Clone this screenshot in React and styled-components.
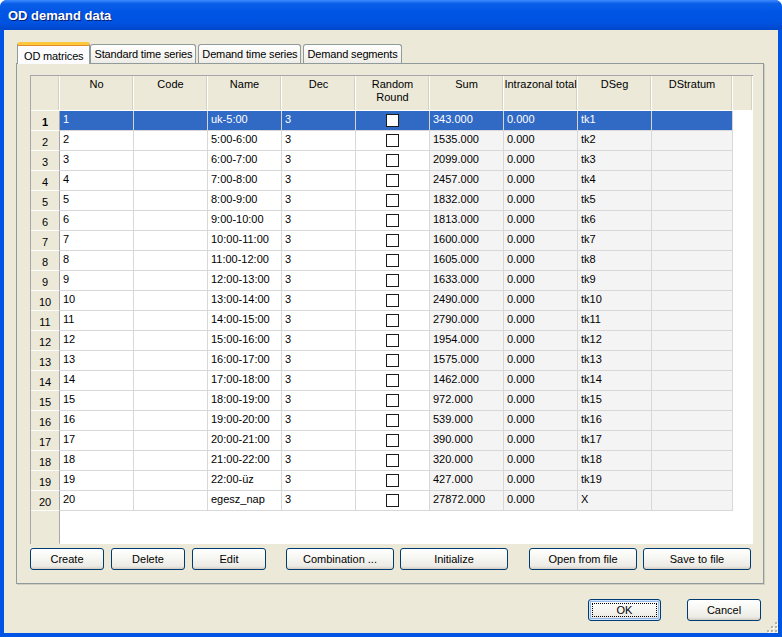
import React from 'react'
import styled, { createGlobalStyle, css } from 'styled-components'

const GlobalStyle = createGlobalStyle`
  *, *::before, *::after {
    box-sizing: border-box;
  }
  html, body {
    margin: 0;
    padding: 0;
    background: #fff;
  }
  body {
    font-family: 'Liberation Sans', Arial, sans-serif;
    font-size: 11px;
    color: #000;
  }
`

// Table content
const names = [
  'uk-5:00', '5:00-6:00', '6:00-7:00', '7:00-8:00', '8:00-9:00', '9:00-10:00',
  '10:00-11:00', '11:00-12:00', '12:00-13:00', '13:00-14:00', '14:00-15:00',
  '15:00-16:00', '16:00-17:00', '17:00-18:00', '18:00-19:00', '19:00-20:00',
  '20:00-21:00', '21:00-22:00', '22:00-üz', 'egesz_nap',
]
const sums = [
  343, 1535, 2099, 2457, 1832, 1813, 1600, 1605, 1633, 2490,
  2790, 1954, 1575, 1462, 972, 539, 390, 320, 427, 27872,
]
const rows = names.map((name, i) => ({
  no: i + 1,
  name,
  sum: `${sums[i]}.000`,
  dseg: i === 19 ? 'X' : `tk${i + 1}`,
}))

const columns = ['No', 'Code', 'Name', 'Dec', 'Random Round', 'Sum', 'Intrazonal total', 'DSeg', 'DStratum', '']
const gridTemplate = '29px repeat(8, 74px) 81px 1fr'

// Window frame
const Window = styled.div`
  width: 782px;
  height: 637px;
  display: flex;
  flex-direction: column;
  background: #0054e3;
  border-radius: 7px 7px 0 0;
  overflow: hidden;
  position: relative;
`

const TitleBar = styled.div`
  height: 30px;
  flex-shrink: 0;
  display: flex;
  align-items: center;
  padding-left: 8px;
  padding-top: 1px;
  background: linear-gradient(
    to bottom,
    #3d8bff 0%,
    #0a5fe8 12%,
    #0055e5 40%,
    #0053e1 75%,
    #0047c9 100%
  );
`

const Title = styled.span`
  font-family: 'Liberation Sans', Arial, sans-serif;
  font-weight: 700;
  font-size: 13px;
  color: #fff;
  text-shadow: 1px 1px 0 #0a1e6e;
`

const Client = styled.div`
  flex: 1;
  margin: 0 4px 4px 4px;
  background: #ece9d8;
  display: flex;
  flex-direction: column;
  padding: 12px 14px 0 12px;
`

// Tabs
const TabStrip = styled.div`
  display: flex;
  align-items: flex-end;
  height: 21px;
  padding-left: 1px;
  position: relative;
  z-index: 1;
`

const Tab = styled.div`
  height: 19px;
  padding: 0 3px;
  display: flex;
  align-items: center;
  border: 1px solid #919b9c;
  border-bottom: none;
  border-radius: 3px 3px 0 0;
  background: linear-gradient(to bottom, #fefefe, #f4f3ee 70%, #ecebe5);
  margin-left: ${(p) => p.$gap || 0}px;
  white-space: nowrap;
  letter-spacing: -0.15px;

  ${(p) =>
    p.$active &&
    css`
      height: 22px;
      padding: 2px 6px 0 6px;
      background: #fcfcfe;
      border-top: 3px solid #ffc83c;
      box-shadow: inset 0 1px 0 #e68b2c;
      margin-bottom: -1px;
    `}
`

const Panel = styled.div`
  height: 521px;
  border: 1px solid #919b9c;
  background: #ece9d8;
  padding: 11px 0 0 13px;
  display: flex;
  flex-direction: column;
  box-shadow: 1px 1px 0 #d0cec2;
`

// Grid
const Grid = styled.div`
  width: 723px;
  height: 469px;
  flex-shrink: 0;
  border-top: 1px solid #a7a6aa;
  border-left: 1px solid #a7a6aa;
  background: #fff;
  display: flex;
  flex-direction: column;
`

const GridRow = styled.div`
  display: grid;
  grid-template-columns: ${gridTemplate};
  height: ${(p) => p.$height}px;
  flex-shrink: 0;
`

const FillRow = styled(GridRow)`
  flex: 1;
`

const HeaderCell = styled.div`
  background: #ece9d8;
  border-right: 1px solid #fff;
  box-shadow: inset -1px 0 0 #d6d2c2;
  border-bottom: 1px solid #fff;
  text-align: center;
  padding-top: 2px;
  line-height: 13px;
  white-space: pre-line;
  overflow: hidden;
`

const RowHeader = styled.div`
  background: #ece9d8;
  border-right: 1px solid #a7a6aa;
  border-bottom: 1px solid ${(p) => (p.$fill ? '#ece9d8' : '#fff')};
  display: flex;
  align-items: center;
  justify-content: center;
  padding-top: 2px;
  font-weight: ${(p) => (p.$current ? 700 : 400)};
`

const Cell = styled.div`
  background: ${(p) => (p.$selected ? '#316ac5' : p.$readonly ? '#f5f4f4' : '#fff')};
  color: ${(p) => (p.$selected ? '#fff' : '#000')};
  border-right: 1px solid ${(p) => (p.$selected ? '#d4d4d4' : '#d8d8d8')};
  border-bottom: 1px solid #d8d8d8;
  padding: 2px 0 0 3px;
  white-space: nowrap;
  overflow: hidden;
  display: flex;
  justify-content: ${(p) => (p.$center ? 'center' : 'flex-start')};
`

const Blank = styled.div`
  background: #fff;
`

const CheckBox = styled.span`
  display: block;
  width: 13px;
  height: 13px;
  border: 1px solid #1a1a1a;
  background: #fff;
  margin-top: 1px;
  margin-left: -3px;
`

// Buttons
const ButtonBar = styled.div`
  display: flex;
  margin-top: 4px;
`

const Button = styled.button`
  font-family: 'Liberation Sans', Arial, sans-serif;
  font-size: 11px;
  color: #000;
  height: 22px;
  width: ${(p) => p.$width || 74}px;
  margin-left: ${(p) => p.$gap || 0}px;
  padding: 0;
  border: 1px solid #003c74;
  border-radius: 3px;
  background: linear-gradient(to bottom, #ffffff 0%, #f7f7f3 40%, #ecebe6 85%, #d6d0c5 100%);
  box-shadow: inset 0 -1px 0 #d6d0c5;
  position: relative;

  ${(p) =>
    p.$default &&
    css`
      box-shadow: inset 0 0 0 1px #cee7ff, inset 0 0 0 2px #98b8ea;
      &::after {
        content: '';
        position: absolute;
        inset: 3px;
        border: 1px dotted #000;
      }
    `}
`

const Footer = styled.div`
  display: flex;
  justify-content: flex-end;
  padding-top: 15px;
  padding-right: 3px;
`

const Grip = styled.svg`
  position: absolute;
  right: 4px;
  bottom: 4px;
`

function ResizeGrip() {
  const dots = [
    [10, 2],
    [6, 6], [10, 6],
    [2, 10], [6, 10], [10, 10],
  ]
  return (
    <Grip width="13" height="13" viewBox="0 0 13 13">
      {dots.map(([x, y]) => (
        <g key={`${x}-${y}`}>
          <rect x={x + 1} y={y + 1} width="2" height="2" fill="#fff" />
          <rect x={x} y={y} width="2" height="2" fill="#b8b4a2" />
        </g>
      ))}
    </Grip>
  )
}

const App = () => {
  return (
    <>
      <GlobalStyle />
      <Window>
        <TitleBar>
          <Title>OD demand data</Title>
        </TitleBar>
        <Client>
          <TabStrip>
            <Tab $active>OD matrices</Tab>
            <Tab>Standard time series</Tab>
            <Tab $gap={2}>Demand time series</Tab>
            <Tab $gap={2}>Demand segments</Tab>
          </TabStrip>
          <Panel>
            <Grid>
              <GridRow $height={35}>
                <HeaderCell />
                {columns.map((c, i) => (
                  <HeaderCell key={i}>{c === 'Random Round' ? 'Random\nRound' : c}</HeaderCell>
                ))}
              </GridRow>
              {rows.map((r, i) => {
                const sel = i === 0
                return (
                  <GridRow key={r.no} $height={20}>
                    <RowHeader $current={sel}>{r.no}</RowHeader>
                    <Cell $selected={sel}>{r.no}</Cell>
                    <Cell $selected={sel} />
                    <Cell $selected={sel}>{r.name}</Cell>
                    <Cell $selected={sel}>3</Cell>
                    <Cell $selected={sel} $center>
                      <CheckBox />
                    </Cell>
                    <Cell $selected={sel} $readonly>{r.sum}</Cell>
                    <Cell $selected={sel} $readonly>0.000</Cell>
                    <Cell $selected={sel} $readonly>{r.dseg}</Cell>
                    <Cell $selected={sel} $readonly />
                    <Blank />
                  </GridRow>
                )
              })}
              <FillRow>
                <RowHeader $fill />
              </FillRow>
            </Grid>
            <ButtonBar>
              <Button>Create</Button>
              <Button $gap={7}>Delete</Button>
              <Button $gap={7}>Edit</Button>
              <Button $width={108} $gap={20}>Combination ...</Button>
              <Button $width={108} $gap={6}>Initialize</Button>
              <Button $width={108} $gap={21}>Open from file</Button>
              <Button $width={108} $gap={6}>Save to file</Button>
            </ButtonBar>
          </Panel>
          <Footer>
            <Button $default $width={73}>OK</Button>
            <Button $gap={26} $width={74}>Cancel</Button>
          </Footer>
        </Client>
        <ResizeGrip />
      </Window>
    </>
  )
}

export default App
